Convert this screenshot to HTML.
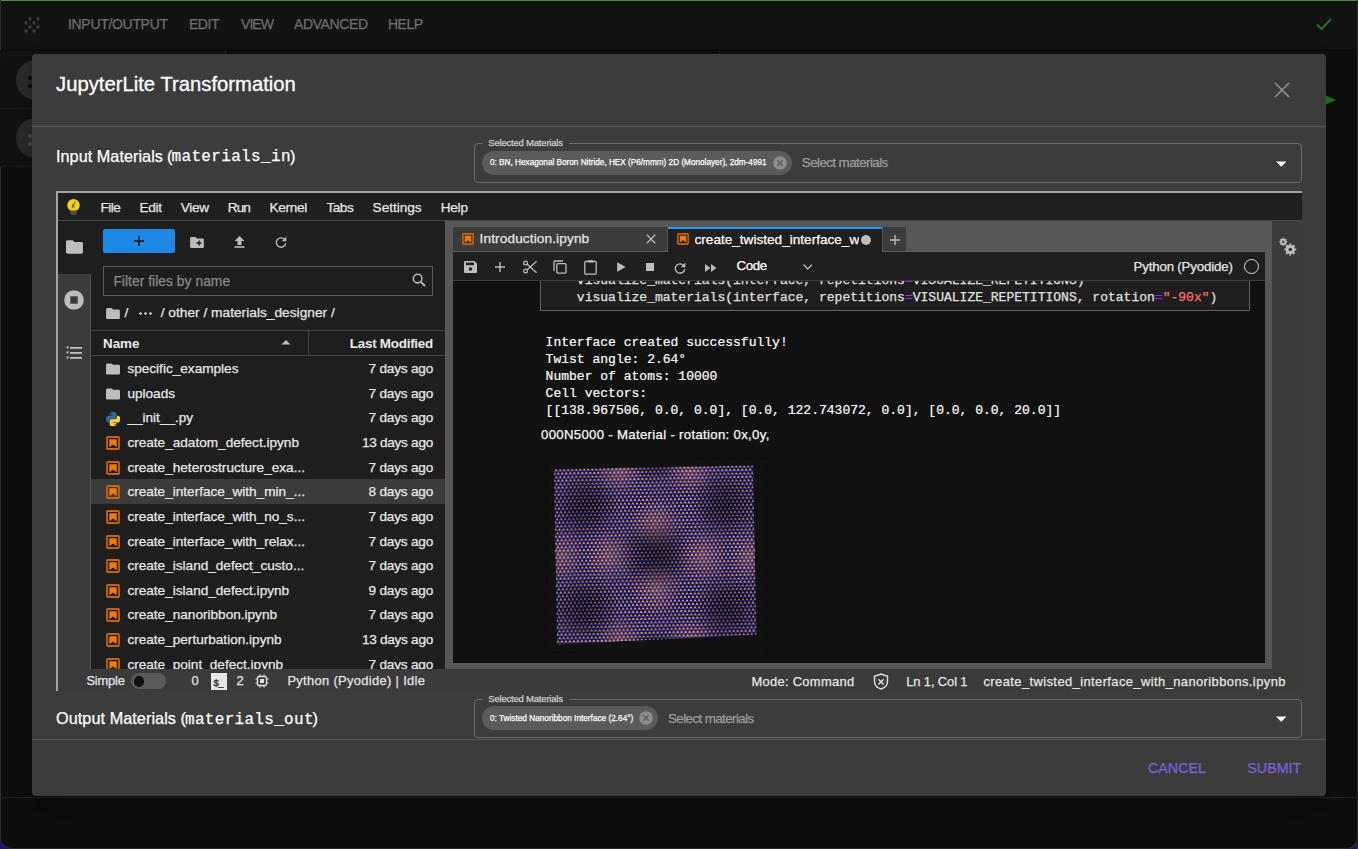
<!DOCTYPE html>
<html><head><meta charset="utf-8">
<style>
*{box-sizing:border-box;margin:0;padding:0}
html,body{width:1358px;height:849px;overflow:hidden;background:#0e0e0e;font-family:"Liberation Sans",sans-serif;position:relative}
.a{position:absolute;white-space:nowrap;-webkit-text-stroke-width:0.25px}
</style></head><body>
<div class="a" style="left:0px;top:0px;width:1358px;height:849px;background:#0e0e0e"></div>
<div class="a" style="left:0px;top:0px;width:1358px;height:1px;background:#4b8a4b"></div>
<div class="a" style="left:0px;top:1px;width:1358px;height:48px;background:#131313"></div>
<div class="a" style="left:0px;top:49px;width:1358px;height:1px;background:#0b0b0b"></div>
<div class="a" style="left:0px;top:0px;width:1px;height:849px;background:#2c2c2c"></div>
<div class="a" style="left:1357px;top:0px;width:1px;height:849px;background:#2c2c2c"></div>
<svg class="a" style="left:22px;top:16px" width="20" height="18" viewBox="0 0 20 18"><g fill="#3a3a3a"><circle cx="8" cy="3" r="1.7"/><circle cx="16" cy="3" r="1.7"/><circle cx="4" cy="7" r="1.7"/><circle cx="12" cy="7" r="1.7"/><circle cx="8" cy="11" r="1.7"/><circle cx="16" cy="11" r="1.7"/><circle cx="4" cy="15" r="1.7"/><circle cx="12" cy="15" r="1.7"/></g></svg>
<div class="a" style="left:68.00px;top:17.30px;font-size:14.000px;line-height:1;color:#6e6e6e;letter-spacing:-0.313px">INPUT/OUTPUT</div>
<div class="a" style="left:189.00px;top:17.30px;font-size:14.000px;line-height:1;color:#6e6e6e;letter-spacing:-0.463px">EDIT</div>
<div class="a" style="left:241.00px;top:17.30px;font-size:14.000px;line-height:1;color:#6e6e6e;letter-spacing:-0.927px">VIEW</div>
<div class="a" style="left:294.00px;top:17.30px;font-size:14.000px;line-height:1;color:#6e6e6e;letter-spacing:-0.394px">ADVANCED</div>
<div class="a" style="left:388.00px;top:17.30px;font-size:14.000px;line-height:1;color:#6e6e6e;letter-spacing:-0.525px">HELP</div>
<svg class="a" style="left:1314px;top:15px" width="20" height="18" viewBox="0 0 20 18"><path d="M3 9.5 L7.5 14 L17 4" fill="none" stroke="#2e6b2e" stroke-width="2"/></svg>
<div class="a" style="left:0px;top:50px;width:225px;height:58px;background:#121212"></div>
<div class="a" style="left:0px;top:108px;width:225px;height:1px;background:#1a1a1a"></div>
<div class="a" style="left:0px;top:109px;width:225px;height:57px;background:#121212"></div>
<div class="a" style="left:0px;top:166px;width:225px;height:1px;background:#1a1a1a"></div>
<div class="a" style="left:225px;top:50px;width:1px;height:6px;background:#222"></div>
<div class="a" style="left:719px;top:50px;width:1px;height:5px;background:#1e1e1e"></div>
<div class="a" style="left:16px;top:60px;width:40px;height:40px;border-radius:50%;background:#2b2b2b"></div>
<div class="a" style="left:28px;top:76px;width:4px;height:4px;border-radius:50%;background:#080808"></div>
<div class="a" style="left:28px;top:84px;width:4px;height:4px;border-radius:50%;background:#080808"></div>
<div class="a" style="left:16px;top:118px;width:40px;height:40px;border-radius:50%;background:#2b2b2b"></div>
<div class="a" style="left:28px;top:134px;width:4px;height:4px;border-radius:50%;background:#4a4a4a"></div>
<div class="a" style="left:28px;top:142px;width:4px;height:4px;border-radius:50%;background:#4a4a4a"></div>
<svg class="a" style="left:1326px;top:94px" width="12" height="12" viewBox="0 0 12 12"><path d="M0 1.5 L10 6 L0 10.5Z" fill="#1a7a1a"/></svg>
<div class="a" style="left:0px;top:797px;width:1358px;height:1px;background:#222"></div>
<div class="a" style="left:0px;top:836px;width:14px;height:13px;background:#2a0f70"></div>
<div class="a" style="left:1344px;top:836px;width:14px;height:13px;background:#2a0f70"></div>
<div class="a" style="left:0;top:798px;width:1358px;height:51px;background:#0e0e0e;border-radius:0 0 11px 11px;border:1px solid #2c2c2c;border-top:none"></div>
<div class="a" style="left:32px;top:54px;width:1294px;height:742px;background:#3c3c3c;border-radius:4px;box-shadow:0 11px 15px -7px rgba(0,0,0,.2),0 24px 38px 3px rgba(0,0,0,.14)"></div>
<div class="a" style="left:56.00px;top:74.43px;font-size:20.200px;line-height:1;color:#fff;letter-spacing:0.034px;-webkit-text-stroke:0.3px #fff">JupyterLite Transformation</div>
<svg class="a" style="left:1273px;top:81px" width="18" height="18" viewBox="0 0 18 18"><path d="M2 2 L16 16 M16 2 L2 16" stroke="#8c8c8c" stroke-width="1.7"/></svg>
<div class="a" style="left:32px;top:126px;width:1294px;height:1px;background:#575757"></div>
<div class="a" style="left:56.00px;top:147.83px;font-size:16.200px;line-height:1;color:#fff;letter-spacing:0.053px;-webkit-text-stroke:0.25px #fff">Input Materials</div>
<div class="a" style="left:167.00px;top:147.57px;font-size:16.500px;line-height:1;color:#fff;-webkit-text-stroke:0.25px #fff">(</div>
<div class="a" style="left:171.50px;top:149.44px;font-size:16.000px;line-height:1;color:#fff;letter-spacing:0.344px;font-family:'Liberation Mono',monospace;-webkit-text-stroke:0.25px #fff">materials_in</div>
<div class="a" style="left:290.00px;top:147.57px;font-size:16.500px;line-height:1;color:#fff;-webkit-text-stroke:0.25px #fff">)</div>
<div class="a" style="left:56.00px;top:710.13px;font-size:16.200px;line-height:1;color:#fff;letter-spacing:0.077px;-webkit-text-stroke:0.25px #fff">Output Materials</div>
<div class="a" style="left:180.50px;top:709.88px;font-size:16.500px;line-height:1;color:#fff;-webkit-text-stroke:0.25px #fff">(</div>
<div class="a" style="left:185.00px;top:711.74px;font-size:16.000px;line-height:1;color:#fff;letter-spacing:0.307px;font-family:'Liberation Mono',monospace;-webkit-text-stroke:0.25px #fff">materials_out</div>
<div class="a" style="left:312.50px;top:709.88px;font-size:16.500px;line-height:1;color:#fff;-webkit-text-stroke:0.25px #fff">)</div>
<div class="a" style="left:32px;top:739px;width:1294px;height:1px;background:#575757"></div>
<div class="a" style="left:1148.00px;top:760.64px;font-size:14.300px;line-height:1;color:#7e60d8;letter-spacing:-0.002px">CANCEL</div>
<div class="a" style="left:1247.30px;top:760.64px;font-size:14.300px;line-height:1;color:#7e60d8;letter-spacing:-0.005px">SUBMIT</div>
<div class="a" style="left:474px;top:143px;width:828px;height:40px;border:1px solid #6a6a6a;border-radius:4px"></div>
<div class="a" style="left:483px;top:142px;width:86px;height:3px;background:#3c3c3c"></div>
<div class="a" style="left:488.30px;top:137.62px;font-size:9.500px;line-height:1;color:#cfcfcf;letter-spacing:-0.203px">Selected Materials</div>
<div class="a" style="left:482px;top:150.5px;width:309.6px;height:24px;border-radius:12px;background:#5b5b5b"></div>
<div class="a" style="left:489.80px;top:158.35px;font-size:9.000px;line-height:1;color:#fff;transform:scaleX(0.9110);transform-origin:0 0;-webkit-text-stroke:0.25px #fff">0: BN, Hexagonal Boron Nitride, HEX (P6/mmm) 2D (Monolayer), 2dm-4991</div>
<svg class="a" style="left:772.8px;top:156px" width="14" height="14" viewBox="0 0 14 14"><circle cx="7" cy="7" r="6.8" fill="#8d8d8d"/><path d="M4.3 4.3L9.7 9.7M9.7 4.3L4.3 9.7" stroke="#5b5b5b" stroke-width="1.3"/></svg>
<div class="a" style="left:801.80px;top:156.11px;font-size:13.400px;line-height:1;color:#9c9c9c;letter-spacing:-0.588px">Select materials</div>
<svg class="a" style="left:1276px;top:161px" width="11" height="6" viewBox="0 0 11 6"><path d="M0 0.5L10.5 0.5L5.25 5.8z" fill="#fff"/></svg>
<div class="a" style="left:474px;top:699px;width:828px;height:39px;border:1px solid #6a6a6a;border-radius:4px"></div>
<div class="a" style="left:483px;top:698px;width:86px;height:3px;background:#3c3c3c"></div>
<div class="a" style="left:488.30px;top:693.62px;font-size:9.500px;line-height:1;color:#cfcfcf;letter-spacing:-0.203px">Selected Materials</div>
<div class="a" style="left:482px;top:706.0px;width:175.6px;height:24px;border-radius:12px;background:#5b5b5b"></div>
<div class="a" style="left:489.80px;top:713.85px;font-size:9.000px;line-height:1;color:#fff;transform:scaleX(0.9155);transform-origin:0 0;-webkit-text-stroke:0.25px #fff">0: Twisted Nanoribbon Interface (2.64°)</div>
<svg class="a" style="left:639px;top:711px" width="14" height="14" viewBox="0 0 14 14"><circle cx="7" cy="7" r="6.8" fill="#8d8d8d"/><path d="M4.3 4.3L9.7 9.7M9.7 4.3L4.3 9.7" stroke="#5b5b5b" stroke-width="1.3"/></svg>
<div class="a" style="left:668.00px;top:711.61px;font-size:13.400px;line-height:1;color:#9c9c9c;letter-spacing:-0.602px">Select materials</div>
<svg class="a" style="left:1276px;top:716px" width="11" height="6" viewBox="0 0 11 6"><path d="M0 0.5L10.5 0.5L5.25 5.8z" fill="#fff"/></svg>
<div class="a" style="left:56px;top:191px;width:1246px;height:2px;background:#a3a3a3"></div>
<div class="a" style="left:56px;top:191px;width:2px;height:500px;background:#a3a3a3"></div>
<div class="a" style="left:58px;top:193px;width:1244px;height:27px;background:#1f1f1f"></div>
<div class="a" style="left:58px;top:220px;width:1244px;height:1px;background:#474747"></div>
<svg class="a" style="left:67px;top:199px" width="14" height="16" viewBox="0 0 14 16"><circle cx="6.5" cy="6.2" r="6.2" fill="#f5d218"/><path d="M3.2 11.6H9.8V14A2 2 0 0 1 7.8 16H5.2A2 2 0 0 1 3.2 14Z" fill="#4e4e4e"/><path d="M4.8 9.5L8.2 2.8M5.5 5.2L7.5 8.5" stroke="#333" stroke-width="0.9" fill="none"/></svg>
<div class="a" style="left:100.50px;top:200.54px;font-size:13.600px;line-height:1;color:#e6e6e6;letter-spacing:-0.538px">File</div>
<div class="a" style="left:139.40px;top:200.54px;font-size:13.600px;line-height:1;color:#e6e6e6;letter-spacing:-0.245px">Edit</div>
<div class="a" style="left:180.70px;top:200.54px;font-size:13.600px;line-height:1;color:#e6e6e6;letter-spacing:-0.278px">View</div>
<div class="a" style="left:227.70px;top:200.54px;font-size:13.600px;line-height:1;color:#e6e6e6;letter-spacing:-0.875px">Run</div>
<div class="a" style="left:269.40px;top:200.54px;font-size:13.600px;line-height:1;color:#e6e6e6;letter-spacing:-0.283px">Kernel</div>
<div class="a" style="left:326.50px;top:200.54px;font-size:13.600px;line-height:1;color:#e6e6e6;letter-spacing:-0.509px">Tabs</div>
<div class="a" style="left:372.60px;top:200.54px;font-size:13.600px;line-height:1;color:#e6e6e6;letter-spacing:-0.006px">Settings</div>
<div class="a" style="left:440.70px;top:200.54px;font-size:13.600px;line-height:1;color:#e6e6e6;letter-spacing:-0.224px">Help</div>
<div class="a" style="left:58px;top:221px;width:33px;height:448px;background:#3b3b3b"></div>
<div class="a" style="left:58px;top:221px;width:33px;height:53px;background:#1e1e1e"></div>
<div class="a" style="left:90px;top:274px;width:1px;height:395px;background:#555555"></div>
<svg class="a" style="left:65.5px;top:239.5px" width="17" height="14" viewBox="2 4 20 16"><path fill="#bdbdbd" d="M10 4H4c-1.1 0-1.99.9-1.99 2L2 18c0 1.1.9 2 2 2h16c1.1 0 2-.9 2-2V8c0-1.1-.9-2-2-2h-8l-2-2z"/></svg>
<svg class="a" style="left:64px;top:290px" width="20" height="20" viewBox="0 0 20 20"><circle cx="10" cy="10" r="9.8" fill="#bdbdbd"/><rect x="6.3" y="6.3" width="7.4" height="7.4" fill="#3a3a3a"/></svg>
<svg class="a" style="left:65px;top:346px" width="18" height="14" viewBox="0 0 18 14"><g fill="#bdbdbd"><rect x="5" y="1" width="12" height="1.8"/><rect x="5" y="6" width="12" height="1.8"/><rect x="5" y="11" width="12" height="1.8"/><path d="M1 0.6h3L2.5 3.2z M1 5.6h3L2.5 8.2z M1 10.6h3L2.5 13.2z"/></g></svg>
<div class="a" style="left:91px;top:221px;width:354px;height:448px;background:#1e1e1e"></div>
<div class="a" style="left:103px;top:229px;width:72px;height:24px;background:#1e88e5;border-radius:2px"></div>
<svg class="a" style="left:134px;top:236px" width="10" height="10" viewBox="0 0 10 10"><path d="M5 0v10M0 5h10" stroke="#111" stroke-width="1.5"/></svg>
<svg class="a" style="left:190px;top:236.5px" width="14" height="11" viewBox="2 4 20 16"><path fill="#bdbdbd" d="M10 4H4c-1.1 0-1.99.9-1.99 2L2 18c0 1.1.9 2 2 2h16c1.1 0 2-.9 2-2V8c0-1.1-.9-2-2-2h-8l-2-2z"/><path d="M15 9.2v7.2M11.4 12.8h7.2" stroke="#1e1e1e" stroke-width="2"/></svg>
<svg class="a" style="left:233.5px;top:236px" width="11" height="12" viewBox="0 0 11 12"><path fill="#bdbdbd" d="M5.5 0L0.5 5h3v4h4V5h3z"/><rect x="0.5" y="10.2" width="10" height="1.6" fill="#bdbdbd"/></svg>
<svg class="a" style="left:275px;top:236px" width="12" height="12" viewBox="0 0 12 12"><path d="M10.2 4.3A4.7 4.7 0 1 0 10.7 7.2" fill="none" stroke="#bdbdbd" stroke-width="1.3"/><path d="M11.4 0.6v4.6H6.8z" fill="#bdbdbd"/></svg>
<div class="a" style="left:103px;top:266px;width:330px;height:30px;border:1px solid #5c5c5c"></div>
<div class="a" style="left:113.40px;top:274.97px;font-size:13.800px;line-height:1;color:#8a8a8a;letter-spacing:0.047px">Filter files by name</div>
<svg class="a" style="left:412px;top:273px" width="14" height="14" viewBox="0 0 14 14"><circle cx="5.6" cy="5.6" r="4.3" fill="none" stroke="#bdbdbd" stroke-width="1.5"/><path d="M8.8 8.8L13 13" stroke="#bdbdbd" stroke-width="1.8"/></svg>
<svg class="a" style="left:106px;top:307.5px" width="14" height="11" viewBox="2 4 20 16"><path fill="#bdbdbd" d="M10 4H4c-1.1 0-1.99.9-1.99 2L2 18c0 1.1.9 2 2 2h16c1.1 0 2-.9 2-2V8c0-1.1-.9-2-2-2h-8l-2-2z"/></svg>
<div class="a" style="left:124.50px;top:305.66px;font-size:13.700px;line-height:1;color:#e6e6e6">/</div>
<svg class="a" style="left:138.5px;top:312px" width="13" height="3" viewBox="0 0 13 3"><g fill="#dcdcdc"><circle cx="1.5" cy="1.5" r="1.3"/><circle cx="6.5" cy="1.5" r="1.3"/><circle cx="11.5" cy="1.5" r="1.3"/></g></svg>
<div class="a" style="left:160.70px;top:305.66px;font-size:13.700px;line-height:1;color:#e6e6e6;letter-spacing:0.020px">/ other / materials_designer /</div>
<div class="a" style="left:91px;top:330px;width:354px;height:1px;background:#474747"></div>
<div class="a" style="left:91px;top:355px;width:354px;height:1px;background:#474747"></div>
<div class="a" style="left:308px;top:331px;width:1px;height:24px;background:#474747"></div>
<div class="a" style="left:103.00px;top:336.61px;font-size:13.400px;line-height:1;color:#ececec;letter-spacing:0.001px;font-weight:bold;-webkit-text-stroke-width:0">Name</div>
<svg class="a" style="left:281px;top:339px" width="10" height="6" viewBox="0 0 10 6"><path d="M0.5 5.5L5 1L9.5 5.5z" fill="#bdbdbd"/></svg>
<div class="a" style="left:349.80px;top:336.61px;font-size:13.400px;line-height:1;color:#ececec;letter-spacing:-0.238px;font-weight:bold;-webkit-text-stroke-width:0">Last Modified</div>
<div class="a" style="left:91px;top:479px;width:354px;height:25px;background:#3b3b3b"></div>
<svg class="a" style="left:106px;top:363px" width="14" height="12" viewBox="2 4 20 16"><path fill="#bdbdbd" d="M10 4H4c-1.1 0-1.99.9-1.99 2L2 18c0 1.1.9 2 2 2h16c1.1 0 2-.9 2-2V8c0-1.1-.9-2-2-2h-8l-2-2z"/></svg>
<div class="a" style="left:127.40px;top:362.24px;font-size:13.600px;line-height:1;color:#e8e8e8">specific_examples</div>
<div class="a" style="left:368.50px;top:362.24px;font-size:13.600px;line-height:1;color:#e8e8e8;letter-spacing:-0.193px">7 days ago</div>
<svg class="a" style="left:106px;top:388px" width="14" height="12" viewBox="2 4 20 16"><path fill="#bdbdbd" d="M10 4H4c-1.1 0-1.99.9-1.99 2L2 18c0 1.1.9 2 2 2h16c1.1 0 2-.9 2-2V8c0-1.1-.9-2-2-2h-8l-2-2z"/></svg>
<div class="a" style="left:127.40px;top:386.86px;font-size:13.600px;line-height:1;color:#e8e8e8">uploads</div>
<div class="a" style="left:368.50px;top:386.86px;font-size:13.600px;line-height:1;color:#e8e8e8;letter-spacing:-0.193px">7 days ago</div>
<svg class="a" style="left:106px;top:412px" width="14" height="14" viewBox="0 0 110 110"><path fill="#306998" d="M54.9 0C50.3 0 46 .4 42.1 1.1 30.8 3.1 28.7 7.3 28.7 15v10.2h26.8v3.4H18.6C10.8 28.6 4 33.3 1.9 42.2c-2.5 10.2-2.6 16.6 0 27.3 1.9 7.9 6.5 13.6 14.2 13.6h9.2V70.8c0-8.8 7.7-16.7 16.8-16.7h26.8c7.5 0 13.4-6.1 13.4-13.6V15c0-7.3-6.1-12.7-13.4-13.9C64.3.3 59.5 0 54.9 0zM40.4 8.2c2.8 0 5 2.3 5 5.1s-2.3 5.1-5 5.1-5-2.3-5-5.1 2.3-5.1 5-5.1z"/><path fill="#ffd43b" d="M85.6 28.7v11.9c0 9.2-7.8 17-16.8 17H42.1c-7.3 0-13.4 6.3-13.4 13.6v25.5c0 7.3 6.3 11.5 13.4 13.6 8.5 2.5 16.6 2.9 26.8 0 6.8-1.9 13.4-5.9 13.4-13.6V86.5H55.5v-3.4h40.2c7.8 0 10.7-5.4 13.4-13.6 2.8-8.4 2.7-16.5 0-27.3-1.9-7.8-5.6-13.6-13.4-13.6zM70.6 93.3c2.8 0 5 2.3 5 5.1s-2.3 5.1-5 5.1-5-2.3-5-5.1 2.3-5.1 5-5.1z"/></svg>
<div class="a" style="left:127.40px;top:411.48px;font-size:13.600px;line-height:1;color:#e8e8e8">__init__.py</div>
<div class="a" style="left:368.50px;top:411.48px;font-size:13.600px;line-height:1;color:#e8e8e8;letter-spacing:-0.193px">7 days ago</div>
<svg class="a" style="left:106px;top:436px" width="14" height="14" viewBox="0 0 14 14"><rect x="1" y="1" width="12" height="12" rx="0.8" fill="none" stroke="#cc6208" stroke-width="1.8"/><path d="M3.3 3.3H10.7V11.2L7 8.5L3.3 11.2Z" fill="#f27a00"/></svg>
<div class="a" style="left:127.40px;top:436.10px;font-size:13.600px;line-height:1;color:#e8e8e8">create_adatom_defect.ipynb</div>
<div class="a" style="left:361.90px;top:436.10px;font-size:13.600px;line-height:1;color:#e8e8e8;letter-spacing:-0.270px">13 days ago</div>
<svg class="a" style="left:106px;top:461px" width="14" height="14" viewBox="0 0 14 14"><rect x="1" y="1" width="12" height="12" rx="0.8" fill="none" stroke="#cc6208" stroke-width="1.8"/><path d="M3.3 3.3H10.7V11.2L7 8.5L3.3 11.2Z" fill="#f27a00"/></svg>
<div class="a" style="left:127.40px;top:460.72px;font-size:13.600px;line-height:1;color:#e8e8e8">create_heterostructure_exa...</div>
<div class="a" style="left:368.50px;top:460.72px;font-size:13.600px;line-height:1;color:#e8e8e8;letter-spacing:-0.193px">7 days ago</div>
<svg class="a" style="left:106px;top:485px" width="14" height="14" viewBox="0 0 14 14"><rect x="1" y="1" width="12" height="12" rx="0.8" fill="none" stroke="#cc6208" stroke-width="1.8"/><path d="M3.3 3.3H10.7V11.2L7 8.5L3.3 11.2Z" fill="#f27a00"/></svg>
<div class="a" style="left:127.40px;top:485.34px;font-size:13.600px;line-height:1;color:#e8e8e8">create_interface_with_min_...</div>
<div class="a" style="left:368.50px;top:485.34px;font-size:13.600px;line-height:1;color:#e8e8e8;letter-spacing:-0.193px">8 days ago</div>
<svg class="a" style="left:106px;top:510px" width="14" height="14" viewBox="0 0 14 14"><rect x="1" y="1" width="12" height="12" rx="0.8" fill="none" stroke="#cc6208" stroke-width="1.8"/><path d="M3.3 3.3H10.7V11.2L7 8.5L3.3 11.2Z" fill="#f27a00"/></svg>
<div class="a" style="left:127.40px;top:509.96px;font-size:13.600px;line-height:1;color:#e8e8e8">create_interface_with_no_s...</div>
<div class="a" style="left:368.50px;top:509.96px;font-size:13.600px;line-height:1;color:#e8e8e8;letter-spacing:-0.193px">7 days ago</div>
<svg class="a" style="left:106px;top:535px" width="14" height="14" viewBox="0 0 14 14"><rect x="1" y="1" width="12" height="12" rx="0.8" fill="none" stroke="#cc6208" stroke-width="1.8"/><path d="M3.3 3.3H10.7V11.2L7 8.5L3.3 11.2Z" fill="#f27a00"/></svg>
<div class="a" style="left:127.40px;top:534.58px;font-size:13.600px;line-height:1;color:#e8e8e8">create_interface_with_relax...</div>
<div class="a" style="left:368.50px;top:534.58px;font-size:13.600px;line-height:1;color:#e8e8e8;letter-spacing:-0.193px">7 days ago</div>
<svg class="a" style="left:106px;top:559px" width="14" height="14" viewBox="0 0 14 14"><rect x="1" y="1" width="12" height="12" rx="0.8" fill="none" stroke="#cc6208" stroke-width="1.8"/><path d="M3.3 3.3H10.7V11.2L7 8.5L3.3 11.2Z" fill="#f27a00"/></svg>
<div class="a" style="left:127.40px;top:559.20px;font-size:13.600px;line-height:1;color:#e8e8e8">create_island_defect_custo...</div>
<div class="a" style="left:368.50px;top:559.20px;font-size:13.600px;line-height:1;color:#e8e8e8;letter-spacing:-0.193px">7 days ago</div>
<svg class="a" style="left:106px;top:584px" width="14" height="14" viewBox="0 0 14 14"><rect x="1" y="1" width="12" height="12" rx="0.8" fill="none" stroke="#cc6208" stroke-width="1.8"/><path d="M3.3 3.3H10.7V11.2L7 8.5L3.3 11.2Z" fill="#f27a00"/></svg>
<div class="a" style="left:127.40px;top:583.82px;font-size:13.600px;line-height:1;color:#e8e8e8">create_island_defect.ipynb</div>
<div class="a" style="left:368.50px;top:583.82px;font-size:13.600px;line-height:1;color:#e8e8e8;letter-spacing:-0.193px">9 days ago</div>
<svg class="a" style="left:106px;top:608px" width="14" height="14" viewBox="0 0 14 14"><rect x="1" y="1" width="12" height="12" rx="0.8" fill="none" stroke="#cc6208" stroke-width="1.8"/><path d="M3.3 3.3H10.7V11.2L7 8.5L3.3 11.2Z" fill="#f27a00"/></svg>
<div class="a" style="left:127.40px;top:608.44px;font-size:13.600px;line-height:1;color:#e8e8e8">create_nanoribbon.ipynb</div>
<div class="a" style="left:368.50px;top:608.44px;font-size:13.600px;line-height:1;color:#e8e8e8;letter-spacing:-0.193px">7 days ago</div>
<svg class="a" style="left:106px;top:633px" width="14" height="14" viewBox="0 0 14 14"><rect x="1" y="1" width="12" height="12" rx="0.8" fill="none" stroke="#cc6208" stroke-width="1.8"/><path d="M3.3 3.3H10.7V11.2L7 8.5L3.3 11.2Z" fill="#f27a00"/></svg>
<div class="a" style="left:127.40px;top:633.06px;font-size:13.600px;line-height:1;color:#e8e8e8">create_perturbation.ipynb</div>
<div class="a" style="left:361.90px;top:633.06px;font-size:13.600px;line-height:1;color:#e8e8e8;letter-spacing:-0.270px">13 days ago</div>
<svg class="a" style="left:106px;top:658px" width="14" height="14" viewBox="0 0 14 14"><rect x="1" y="1" width="12" height="12" rx="0.8" fill="none" stroke="#cc6208" stroke-width="1.8"/><path d="M3.3 3.3H10.7V11.2L7 8.5L3.3 11.2Z" fill="#f27a00"/></svg>
<div class="a" style="left:127.40px;top:657.68px;font-size:13.600px;line-height:1;color:#e8e8e8">create_point_defect.ipynb</div>
<div class="a" style="left:368.50px;top:657.68px;font-size:13.600px;line-height:1;color:#e8e8e8;letter-spacing:-0.193px">7 days ago</div>
<div class="a" style="left:445px;top:221px;width:827px;height:448px;background:#575757"></div>
<div class="a" style="left:1272px;top:221px;width:30px;height:448px;background:#3b3b3b"></div>
<svg class="a" style="left:1278px;top:237px" width="20" height="20" viewBox="0 0 20 20"><g fill="#bdbdbd"><circle cx="5.3" cy="4.8" r="3.1"/><path d="M5.3 0.8v8M1.3 4.8h8M2.5 2l5.6 5.6M8.1 2L2.5 7.6" stroke="#bdbdbd" stroke-width="1.5"/><circle cx="12.3" cy="12.5" r="4.6"/><path d="M12.3 6.6v11.8M6.4 12.5h11.8M8.1 8.3l8.4 8.4M16.5 8.3l-8.4 8.4" stroke="#bdbdbd" stroke-width="2"/></g><circle cx="5.3" cy="4.8" r="1.2" fill="#3a3a3a"/><circle cx="12.3" cy="12.5" r="1.8" fill="#3a3a3a"/></svg>
<div class="a" style="left:58px;top:669px;width:1244px;height:22px;background:#3b3b3b"></div>
<div class="a" style="left:86.40px;top:675.33px;font-size:12.900px;line-height:1;color:#e6e6e6;letter-spacing:-0.167px">Simple</div>
<div class="a" style="left:131px;top:673px;width:35px;height:16px;background:#5a5a5a;border-radius:8px"></div>
<div class="a" style="left:133.5px;top:676px;width:10.5px;height:10.5px;border-radius:50%;background:#111"></div>
<div class="a" style="left:191.60px;top:675.33px;font-size:12.900px;line-height:1;color:#e6e6e6">0</div>
<div class="a" style="left:211px;top:673px;width:16px;height:17px;background:#e6e6e6"></div>
<div class="a" style="left:213.50px;top:677.92px;font-size:9.500px;line-height:1;color:#222;letter-spacing:-0.567px">$_</div>
<div class="a" style="left:236.40px;top:675.33px;font-size:12.900px;line-height:1;color:#e6e6e6">2</div>
<svg class="a" style="left:255px;top:674px" width="14" height="14" viewBox="0 0 14 14"><rect x="2.5" y="2.5" width="9" height="9" rx="1.5" fill="none" stroke="#e0e0e0" stroke-width="1.4"/><rect x="5" y="5" width="4" height="4" fill="#e0e0e0"/><path d="M5 0.5v2M9 0.5v2M5 11.5v2M9 11.5v2M0.5 5h2M0.5 9h2M11.5 5h2M11.5 9h2" stroke="#e0e0e0" stroke-width="1.2"/></svg>
<div class="a" style="left:287.40px;top:675.33px;font-size:12.900px;line-height:1;color:#e6e6e6;letter-spacing:0.337px">Python (Pyodide) | Idle</div>
<div class="a" style="left:751.40px;top:675.83px;font-size:12.900px;line-height:1;color:#e6e6e6;letter-spacing:0.321px">Mode: Command</div>
<svg class="a" style="left:873px;top:673px" width="16" height="17" viewBox="0 0 16 17"><path d="M8 1L14.5 3.3V8.5C14.5 12 11.8 14.8 8 16 4.2 14.8 1.5 12 1.5 8.5V3.3z" fill="none" stroke="#e0e0e0" stroke-width="1.4"/><path d="M5.4 6.2l5.2 5.2M10.6 6.2l-5.2 5.2" stroke="#e0e0e0" stroke-width="1.4"/></svg>
<div class="a" style="left:906.20px;top:675.83px;font-size:12.900px;line-height:1;color:#e6e6e6;letter-spacing:-0.099px">Ln 1, Col 1</div>
<div class="a" style="left:983.50px;top:675.83px;font-size:12.900px;line-height:1;color:#e6e6e6;letter-spacing:0.425px">create_twisted_interface_with_nanoribbons.ipynb</div>
<div class="a" style="left:453px;top:227px;width:215px;height:24px;background:#3b3b3b"></div>
<div class="a" style="left:667px;top:227px;width:1px;height:24px;background:#555555"></div>
<div class="a" style="left:453px;top:251px;width:812px;height:1px;background:#5e5e5e"></div>
<svg class="a" style="left:462px;top:233px" width="12" height="12" viewBox="0 0 14 14"><rect x="1" y="1" width="12" height="12" rx="0.8" fill="none" stroke="#cc6208" stroke-width="1.8"/><path d="M3.3 3.3H10.7V11.2L7 8.5L3.3 11.2Z" fill="#f27a00"/></svg>
<div class="a" style="left:479.60px;top:232.24px;font-size:13.600px;line-height:1;color:#e6e6e6;letter-spacing:0.132px">Introduction.ipynb</div>
<svg class="a" style="left:646px;top:233.5px" width="10" height="10" viewBox="0 0 10 10"><path d="M0.8 0.8L9.2 9.2M9.2 0.8L0.8 9.2" stroke="#bdbdbd" stroke-width="1.3"/></svg>
<div class="a" style="left:668px;top:227px;width:214px;height:25px;background:#1f1f1f"></div>
<div class="a" style="left:668px;top:227px;width:214px;height:2px;background:#2196f3"></div>
<svg class="a" style="left:677px;top:233px" width="12" height="12" viewBox="0 0 14 14"><rect x="1" y="1" width="12" height="12" rx="0.8" fill="none" stroke="#cc6208" stroke-width="1.8"/><path d="M3.3 3.3H10.7V11.2L7 8.5L3.3 11.2Z" fill="#f27a00"/></svg>
<div class="a" style="left:694.5px;top:226px;width:164px;height:25px;overflow:hidden"><div class="a" style="left:0.00px;top:6.94px;font-size:13.600px;line-height:1;color:#fff">create_twisted_interface_with_nanoribbons.ipynb</div></div>
<div class="a" style="left:861px;top:235px;width:10.2px;height:10.2px;border-radius:50%;background:#bdbdbd"></div>
<div class="a" style="left:883px;top:227px;width:23px;height:24px;background:#3b3b3b"></div>
<svg class="a" style="left:890px;top:235px" width="10" height="10" viewBox="0 0 10 10"><path d="M5 0v10M0 5h10" stroke="#bdbdbd" stroke-width="1.4"/></svg>
<div class="a" style="left:453px;top:252px;width:812px;height:28px;background:#1f1f1f"></div>
<div class="a" style="left:668px;top:251px;width:214px;height:1px;background:#1f1f1f"></div>
<div class="a" style="left:453px;top:280px;width:812px;height:1px;background:#3c3c3c"></div>
<svg class="a" style="left:463.5px;top:261px" width="13" height="12" viewBox="0 0 13 12"><path d="M1 0h9.5L13 2.5V11a1 1 0 0 1-1 1H1a1 1 0 0 1-1-1V1a1 1 0 0 1 1-1z" fill="#bdbdbd"/><rect x="2" y="1.6" width="8" height="2.6" fill="#1f1f1f"/><circle cx="6.5" cy="8" r="1.8" fill="#1f1f1f"/></svg>
<svg class="a" style="left:495px;top:262px" width="10" height="10" viewBox="0 0 10 10"><path d="M5 0v10M0 5h10" stroke="#bdbdbd" stroke-width="1.4"/></svg>
<svg class="a" style="left:523px;top:260px" width="14" height="14" viewBox="0 0 14 14"><circle cx="2.6" cy="3" r="1.9" fill="none" stroke="#bdbdbd" stroke-width="1.2"/><circle cx="2.6" cy="11" r="1.9" fill="none" stroke="#bdbdbd" stroke-width="1.2"/><path d="M4.2 4.2L13.6 12.8M4.2 9.8L13.6 1.2" stroke="#bdbdbd" stroke-width="1.3"/></svg>
<svg class="a" style="left:552.5px;top:260px" width="14" height="14" viewBox="0 0 14 14"><path d="M1 11V1.8C1 1.3 1.3 1 1.8 1H10" fill="none" stroke="#bdbdbd" stroke-width="1.3"/><rect x="3.8" y="3.6" width="9.2" height="9.6" rx="1" fill="none" stroke="#bdbdbd" stroke-width="1.3"/></svg>
<svg class="a" style="left:583.5px;top:258.5px" width="13" height="16" viewBox="0 0 13 16"><rect x="0.8" y="2.5" width="11.4" height="12.7" rx="1" fill="none" stroke="#bdbdbd" stroke-width="1.3"/><path d="M4 3.4V1.2h5v2.2z" fill="#bdbdbd"/></svg>
<svg class="a" style="left:616.5px;top:262px" width="9" height="10" viewBox="0 0 9 10"><path d="M0.2 0.2L8.6 5L0.2 9.8z" fill="#bdbdbd"/></svg>
<div class="a" style="left:646px;top:263px;width:8px;height:8px;background:#bdbdbd"></div>
<svg class="a" style="left:674px;top:261.5px" width="12" height="12" viewBox="0 0 12 12"><path d="M10.2 4.3A4.7 4.7 0 1 0 10.7 7.2" fill="none" stroke="#bdbdbd" stroke-width="1.3"/><path d="M11.4 0.6v4.6H6.8z" fill="#bdbdbd"/></svg>
<svg class="a" style="left:704.5px;top:263.5px" width="12" height="8" viewBox="0 0 12 8"><path d="M0 0L5.5 4L0 8zM6 0L11.5 4L6 8z" fill="#bdbdbd"/></svg>
<div class="a" style="left:736.60px;top:258.69px;font-size:13.300px;line-height:1;color:#fff;letter-spacing:-0.432px">Code</div>
<svg class="a" style="left:802.5px;top:264px" width="9.5" height="6" viewBox="0 0 9.5 6"><path d="M0.5 0.5L4.75 5L9 0.5" fill="none" stroke="#bdbdbd" stroke-width="1.3"/></svg>
<div class="a" style="left:1133.50px;top:260.19px;font-size:13.300px;line-height:1;color:#e6e6e6;letter-spacing:-0.175px">Python (Pyodide)</div>
<div class="a" style="left:1243.6px;top:258.6px;width:15px;height:15px;border-radius:50%;border:1.3px solid #dcdcdc"></div>
<div class="a" style="left:453px;top:281px;width:812px;height:382px;background:#111111"></div>
<div class="a" style="left:453px;top:281px;width:812px;height:382px;overflow:hidden">
<div class="a" style="left:87px;top:-10px;width:710px;height:40px;background:#1e1e1e;border:1px solid #5e5e5e"></div>
<div class="a" style="left:92.60px;top:-6.90px;font-size:13.031px;line-height:1;color:#e0e0e0;font-family:'Liberation Mono',monospace"><span style="color:#e0e0e0">&nbsp;&nbsp;&nbsp;&nbsp;visualize_materials(interface,&nbsp;repetitions</span><span style="color:#aa22ff">=</span><span style="color:#e0e0e0">VISUALIZE_REPETITIONS)</span></div>
<div class="a" style="left:92.60px;top:10.10px;font-size:13.031px;line-height:1;color:#e0e0e0;font-family:'Liberation Mono',monospace"><span style="color:#e0e0e0">&nbsp;&nbsp;&nbsp;&nbsp;visualize_materials(interface,&nbsp;repetitions</span><span style="color:#aa22ff">=</span><span style="color:#e0e0e0">VISUALIZE_REPETITIONS,&nbsp;rotation</span><span style="color:#aa22ff">=</span><span style="color:#ff7070">"-90x"</span><span style="color:#e0e0e0">)</span></div>
<div class="a" style="left:92.60px;top:55.40px;font-size:13.031px;line-height:1;color:#ffffff;font-family:'Liberation Mono',monospace;-webkit-text-stroke:0.2px #fff">Interface&nbsp;created&nbsp;successfully!</div>
<div class="a" style="left:92.60px;top:72.30px;font-size:13.031px;line-height:1;color:#ffffff;font-family:'Liberation Mono',monospace;-webkit-text-stroke:0.2px #fff">Twist&nbsp;angle:&nbsp;2.64°</div>
<div class="a" style="left:92.60px;top:89.20px;font-size:13.031px;line-height:1;color:#ffffff;font-family:'Liberation Mono',monospace;-webkit-text-stroke:0.2px #fff">Number&nbsp;of&nbsp;atoms:&nbsp;10000</div>
<div class="a" style="left:92.60px;top:106.10px;font-size:13.031px;line-height:1;color:#ffffff;font-family:'Liberation Mono',monospace;-webkit-text-stroke:0.2px #fff">Cell&nbsp;vectors:</div>
<div class="a" style="left:92.60px;top:123.00px;font-size:13.031px;line-height:1;color:#ffffff;font-family:'Liberation Mono',monospace;-webkit-text-stroke:0.2px #fff">[[138.967506,&nbsp;0.0,&nbsp;0.0],&nbsp;[0.0,&nbsp;122.743072,&nbsp;0.0],&nbsp;[0.0,&nbsp;0.0,&nbsp;20.0]]</div>
<div class="a" style="left:88.00px;top:146.68px;font-size:13.200px;line-height:1;color:#fafafa;letter-spacing:0.313px">000N5000 - Material - rotation: 0x,0y,</div>
<svg class="a" style="left:92px;top:176px" width="224" height="198" viewBox="0 0 224 198"><rect x="1.5" y="1.5" width="220" height="194" fill="none" stroke="#0c0c0c" stroke-width="1" stroke-dasharray="8.7 7.6"/></svg>
<svg class="a" style="left:92px;top:178px" width="223" height="194" viewBox="0 0 223 194"><defs><pattern id="bn" width="4" height="7" patternUnits="userSpaceOnUse" patternTransform="rotate(-1.2)"><rect width="4" height="7" fill="#0e0a1e"/><circle cx="1" cy="1" r="1.1" fill="#eca090"/><circle cx="3" cy="4.5" r="1.1" fill="#eca090"/><circle cx="3" cy="2.2" r="1.05" fill="#2434d0"/><circle cx="1" cy="5.7" r="1.05" fill="#2434d0"/></pattern><radialGradient id="dk"><stop offset="0" stop-color="#000" stop-opacity="0.5"/><stop offset="0.45" stop-color="#000" stop-opacity="0.36"/><stop offset="1" stop-color="#000" stop-opacity="0"/></radialGradient><radialGradient id="lt"><stop offset="0" stop-color="#f0a090" stop-opacity="0.28"/><stop offset="1" stop-color="#f0a090" stop-opacity="0"/></radialGradient><clipPath id="cq"><polygon points="9.0,10.0 208.0,6.6 211.5,175.6 12.3,185.6"/></clipPath></defs><g clip-path="url(#cq)"><rect width="223" height="194" fill="url(#bn)"/><circle cx="40.0" cy="48.0" r="34" fill="url(#dk)"/><circle cx="180.0" cy="46.0" r="34" fill="url(#dk)"/><circle cx="110.0" cy="95.0" r="36" fill="url(#dk)"/><circle cx="40.0" cy="149.0" r="34" fill="url(#dk)"/><circle cx="183.0" cy="149.0" r="34" fill="url(#dk)"/><circle cx="110.0" cy="-7.0" r="30" fill="url(#dk)"/><circle cx="110.0" cy="201.0" r="30" fill="url(#dk)"/><circle cx="-30.0" cy="97.0" r="30" fill="url(#dk)"/><circle cx="250.0" cy="97.0" r="30" fill="url(#dk)"/><circle cx="110.0" cy="63.0" r="26" fill="url(#lt)"/><circle cx="63.0" cy="97.0" r="26" fill="url(#lt)"/><circle cx="158.0" cy="97.0" r="26" fill="url(#lt)"/><circle cx="111.0" cy="131.0" r="26" fill="url(#lt)"/><circle cx="15.0" cy="97.0" r="24" fill="url(#lt)"/><circle cx="205.0" cy="97.0" r="24" fill="url(#lt)"/><circle cx="75.0" cy="11.0" r="24" fill="url(#lt)"/><circle cx="145.0" cy="11.0" r="24" fill="url(#lt)"/><circle cx="75.0" cy="183.0" r="24" fill="url(#lt)"/><circle cx="145.0" cy="183.0" r="24" fill="url(#lt)"/></g></svg>
</div>
</body></html>
